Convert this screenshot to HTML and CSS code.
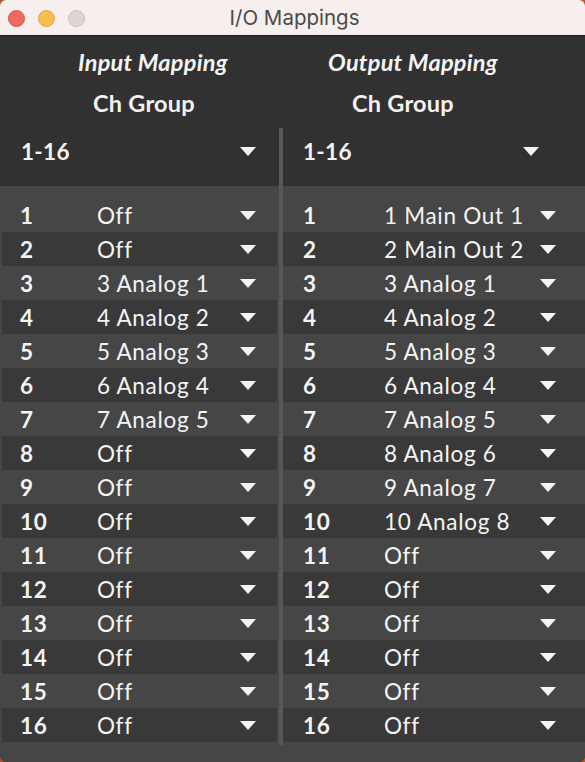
FILE: index.html
```html
<!DOCTYPE html>
<html lang="en">
<head>
  <meta charset="UTF-8">
  <meta name="viewport" content="width=device-width, initial-scale=1.0">
  <title>I/O Mappings</title>
  <link rel="stylesheet" href="styles.css">
</head>
<body>
  <div class="window">
    <!-- Title Bar -->
    <div class="titlebar">
      <div class="lights">
        <span class="light red"></span>
        <span class="light yellow"></span>
        <span class="light gray"></span>
      </div>
      <div class="title">I/O Mappings</div>
    </div>

    <div class="content">
      <!-- Headers -->
      <div class="columns">
        <div class="col col-left">
          <div class="heading">Input Mapping</div>
          <div class="label">Ch Group</div>
          <div class="group"><span class="group-value">1-16</span><span class="caret"></span></div>
        </div>
        <div class="col col-right">
          <div class="heading">Output Mapping</div>
          <div class="label">Ch Group</div>
          <div class="group"><span class="group-value">1-16</span><span class="caret"></span></div>
        </div>
      </div>

      <!-- Channel List -->
      <div class="columns list">
        <div class="col col-left">
          <div class="row"><span class="num">1</span><span class="val">Off</span><span class="caret"></span></div>
          <div class="row"><span class="num">2</span><span class="val">Off</span><span class="caret"></span></div>
          <div class="row"><span class="num">3</span><span class="val">3 Analog 1</span><span class="caret"></span></div>
          <div class="row"><span class="num">4</span><span class="val">4 Analog 2</span><span class="caret"></span></div>
          <div class="row"><span class="num">5</span><span class="val">5 Analog 3</span><span class="caret"></span></div>
          <div class="row"><span class="num">6</span><span class="val">6 Analog 4</span><span class="caret"></span></div>
          <div class="row"><span class="num">7</span><span class="val">7 Analog 5</span><span class="caret"></span></div>
          <div class="row"><span class="num">8</span><span class="val">Off</span><span class="caret"></span></div>
          <div class="row"><span class="num">9</span><span class="val">Off</span><span class="caret"></span></div>
          <div class="row"><span class="num">10</span><span class="val">Off</span><span class="caret"></span></div>
          <div class="row"><span class="num">11</span><span class="val">Off</span><span class="caret"></span></div>
          <div class="row"><span class="num">12</span><span class="val">Off</span><span class="caret"></span></div>
          <div class="row"><span class="num">13</span><span class="val">Off</span><span class="caret"></span></div>
          <div class="row"><span class="num">14</span><span class="val">Off</span><span class="caret"></span></div>
          <div class="row"><span class="num">15</span><span class="val">Off</span><span class="caret"></span></div>
          <div class="row"><span class="num">16</span><span class="val">Off</span><span class="caret"></span></div>
        </div>
        <div class="col col-right">
          <div class="row"><span class="num">1</span><span class="val">1 Main Out 1</span><span class="caret"></span></div>
          <div class="row"><span class="num">2</span><span class="val">2 Main Out 2</span><span class="caret"></span></div>
          <div class="row"><span class="num">3</span><span class="val">3 Analog 1</span><span class="caret"></span></div>
          <div class="row"><span class="num">4</span><span class="val">4 Analog 2</span><span class="caret"></span></div>
          <div class="row"><span class="num">5</span><span class="val">5 Analog 3</span><span class="caret"></span></div>
          <div class="row"><span class="num">6</span><span class="val">6 Analog 4</span><span class="caret"></span></div>
          <div class="row"><span class="num">7</span><span class="val">7 Analog 5</span><span class="caret"></span></div>
          <div class="row"><span class="num">8</span><span class="val">8 Analog 6</span><span class="caret"></span></div>
          <div class="row"><span class="num">9</span><span class="val">9 Analog 7</span><span class="caret"></span></div>
          <div class="row"><span class="num">10</span><span class="val">10 Analog 8</span><span class="caret"></span></div>
          <div class="row"><span class="num">11</span><span class="val">Off</span><span class="caret"></span></div>
          <div class="row"><span class="num">12</span><span class="val">Off</span><span class="caret"></span></div>
          <div class="row"><span class="num">13</span><span class="val">Off</span><span class="caret"></span></div>
          <div class="row"><span class="num">14</span><span class="val">Off</span><span class="caret"></span></div>
          <div class="row"><span class="num">15</span><span class="val">Off</span><span class="caret"></span></div>
          <div class="row"><span class="num">16</span><span class="val">Off</span><span class="caret"></span></div>
        </div>
      </div>

      <!-- Column Divider -->
      <div class="divider"></div>
    </div>
  </div>
</body>
</html>
```

FILE: styles.css
```css
/* General */
html, body {
  margin: 0;
  padding: 0;
  background: #b8552b;
}

body {
  font-family: 'Lato', 'Liberation Sans', sans-serif;
  color: #f4f4f4;
  width: 585px;
  height: 762px;
  overflow: hidden;
}

.window {
  height: 762px;
  border-radius: 6px;
  overflow: hidden;
  background: #464646;
  display: flex;
  flex-direction: column;
}

/* Title Bar */
.titlebar {
  height: 35px;
  flex: none;
  background: #f7efed;
  border-bottom: 1px solid #1c1c1c;
  display: flex;
  align-items: center;
  position: relative;
}

.lights {
  display: flex;
  gap: 13px;
  padding-left: 8px;
  padding-top: 1px;
  position: relative;
  z-index: 1;
}

.light {
  width: 17px;
  height: 17px;
  border-radius: 50%;
  box-sizing: border-box;
}

.light.red {
  background: #ed6a5e;
  border: 1px solid #d8554a;
}

.light.yellow {
  background: #f5bf4f;
  border: 1px solid #dba53c;
}

.light.gray {
  background: #dcd6d5;
  border: 1px solid #c8c1c0;
}

.title {
  position: absolute;
  left: 0;
  right: 0;
  text-align: center;
  font-family: 'Inter', 'Noto Sans', sans-serif;
  font-size: 20.5px;
  color: #4a4a4a;
  padding-left: 4px;
}

/* Content */
.content {
  position: relative;
  flex: 1;
}

.columns {
  display: flex;
  background: #313131;
  padding-top: 6px;
}

.col-left {
  width: 279px;
  flex: none;
}

.col-right {
  flex: 1;
  margin-left: 4px;
}

.heading,
.label {
  height: 41px;
  line-height: 41px;
  font-size: 23.5px;
  font-weight: 700;
  letter-spacing: 0.25px;
}

.heading {
  font-style: italic;
}

.col-left .heading { padding-left: 78px; }
.col-right .heading { padding-left: 45px; }
.col-left .label { padding-left: 93px; }
.col-right .label { padding-left: 69px; }

.group {
  display: flex;
  align-items: center;
  height: 46px;
  margin-top: 4px;
  margin-bottom: 12px;
  font-size: 22.5px;
  font-weight: 700;
  letter-spacing: 0.3px;
}

.group-value {
  flex: 1;
}

.col-left .group { padding: 0 23px 0 21px; }
.col-right .group { padding: 0 46px 0 20px; }

/* Caret */
.caret {
  width: 0;
  height: 0;
  border-left: 8.5px solid transparent;
  border-right: 8.5px solid transparent;
  border-top: 9px solid #f4f4f4;
  flex: none;
}

/* Channel List */
.columns.list {
  background: #464646;
  padding: 12px 0 20px;
}

.row {
  display: flex;
  align-items: center;
  height: 34px;
  font-size: 22.5px;
  letter-spacing: 0.7px;
}

.row:nth-child(even) {
  background: #393939;
}

.col-left .row {
  margin: 0 2px;
  padding: 0 21px 0 18px;
}

.col-right .row {
  padding: 0 29px 0 20px;
}

.num {
  font-weight: 700;
  flex: none;
}

.col-left .num { width: 77px; }
.col-right .num { width: 81px; }

.val {
  flex: 1;
  white-space: nowrap;
}

/* Divider */
.divider {
  position: absolute;
  left: 279px;
  top: 92px;
  width: 4px;
  height: 617px;
  background: #575757;
}
```
